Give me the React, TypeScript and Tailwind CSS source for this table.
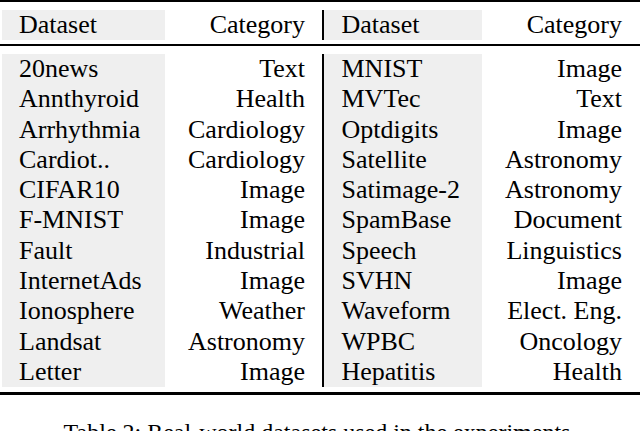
const rows: [string, string, string, string][] = [
  ['20news', 'Text', 'MNIST', 'Image'],
  ['Annthyroid', 'Health', 'MVTec', 'Text'],
  ['Arrhythmia', 'Cardiology', 'Optdigits', 'Image'],
  ['Cardiot..', 'Cardiology', 'Satellite', 'Astronomy'],
  ['CIFAR10', 'Image', 'Satimage-2', 'Astronomy'],
  ['F-MNIST', 'Image', 'SpamBase', 'Document'],
  ['Fault', 'Industrial', 'Speech', 'Linguistics'],
  ['InternetAds', 'Image', 'SVHN', 'Image'],
  ['Ionosphere', 'Weather', 'Waveform', 'Elect. Eng.'],
  ['Landsat', 'Astronomy', 'WPBC', 'Oncology'],
  ['Letter', 'Image', 'Hepatitis', 'Health'],
];

function Row({ cells, h }: { cells: [string, string, string, string]; h: string }) {
  return (
    <div className={`flex ml-[2px] ${h}`}>
      <div className="w-[163px] bg-[#efefef] pl-[17px]">{cells[0]}</div>
      <div className="w-[157px] text-right pr-[17px]">{cells[1]}</div>
      <div className="w-[1.5px] bg-black" />
      <div className="w-[158.5px] bg-[#efefef] pl-[18px]">{cells[2]}</div>
      <div className="flex-1 text-right pr-[18px]">{cells[3]}</div>
    </div>
  );
}

export default function App() {
  return (
    <main className="w-[640px] h-[431px] overflow-hidden bg-white text-black font-['Liberation_Serif','Times_New_Roman',serif] text-[26px]">
      {/* top rule */}
      <div className="h-[2px] bg-black" />
      <div className="mt-[8px]">
        <Row cells={['Dataset', 'Category', 'Dataset', 'Category']} h="h-[30px] leading-[30px]" />
      </div>
      <div className="mt-[4px] h-[2px] bg-black" />
      <div className="mt-[8px] flex flex-col">
        {rows.map((r) => (
          <Row key={r[0]} cells={r} h="h-[30.3px] leading-[30.3px]" />
        ))}
      </div>
      <div className="mt-[5px] h-[2.5px] bg-black" />
      <p className="mt-[22px] text-center text-[24px] leading-[30px]">
        Table 2: Real-world datasets used in the experiments.
      </p>
    </main>
  );
}
